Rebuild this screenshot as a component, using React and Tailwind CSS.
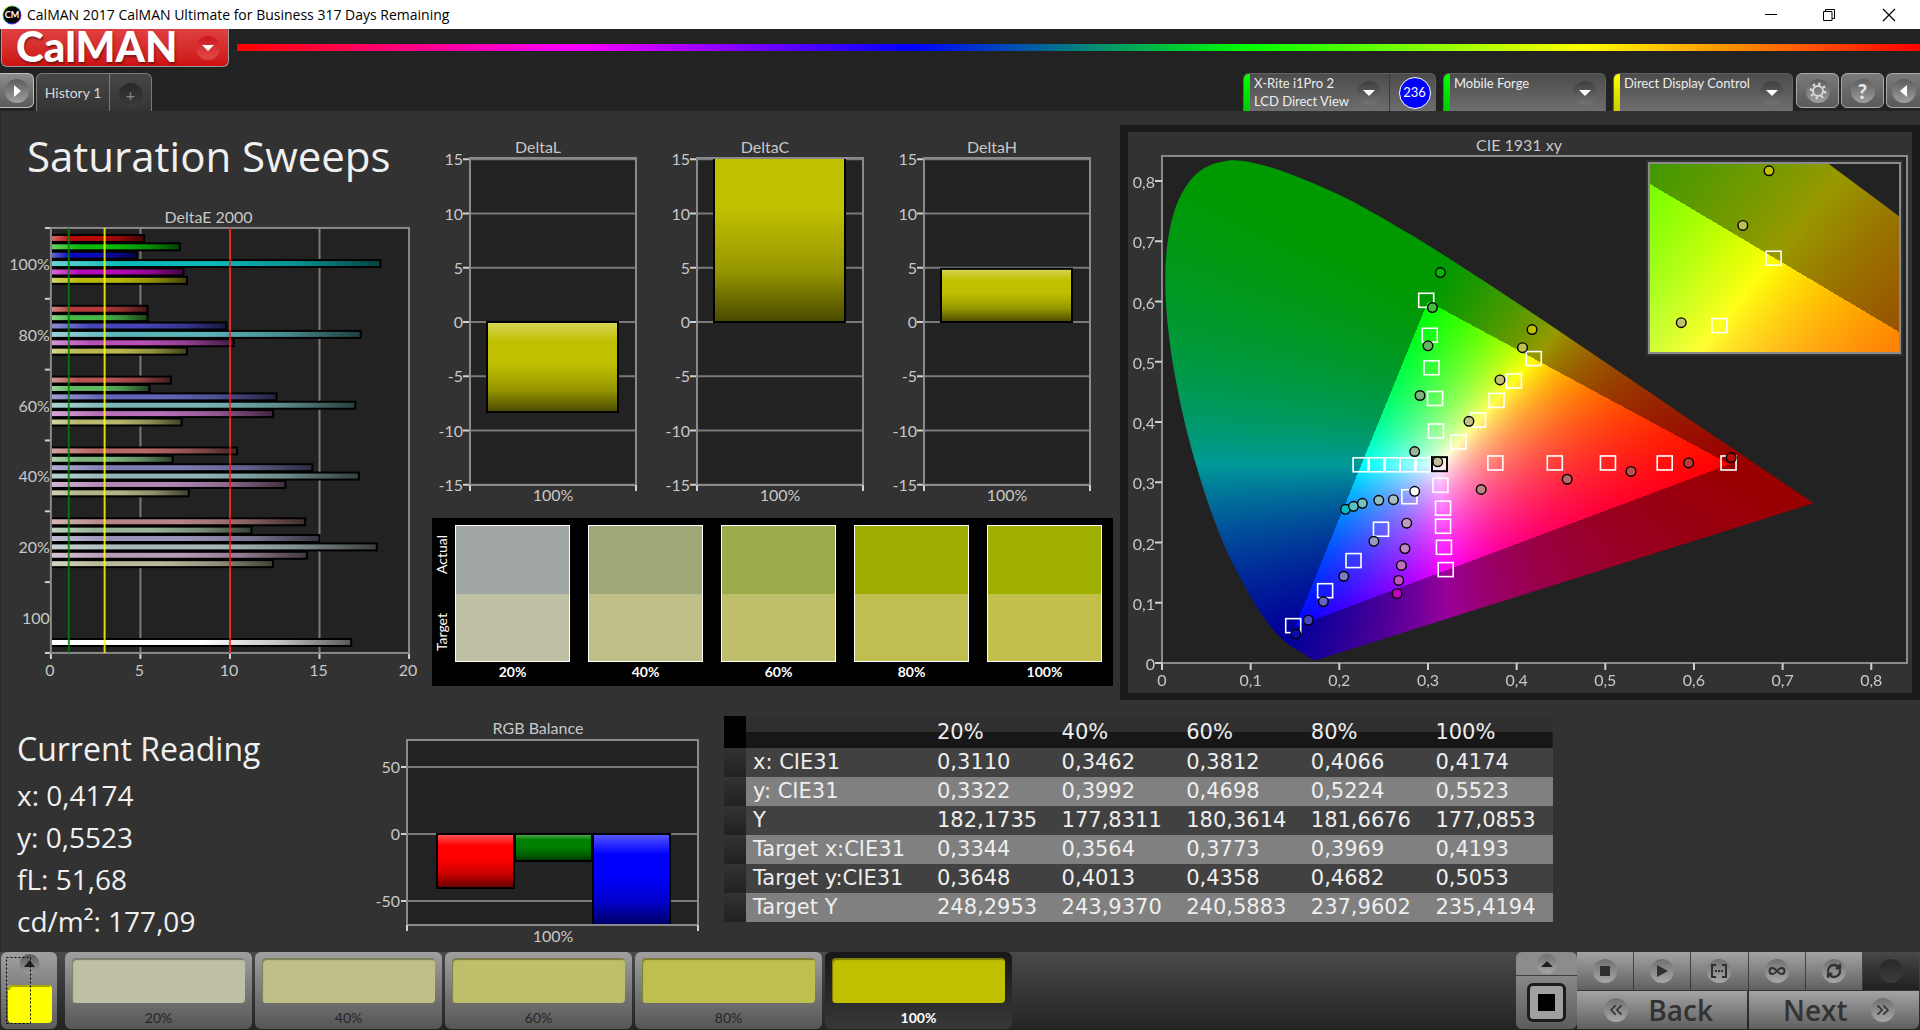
import React, { useLayoutEffect, useRef } from "react";
import {
  ChevronsLeft,
  ChevronsRight,
  Infinity as InfinityIcon,
  RefreshCw,
} from "lucide-react";

const LEVELS = ["20%", "40%", "60%", "80%", "100%"];

// red, green, blue, cyan, magenta, yellow for each saturation level
const PALETTE = {
  100: ["#b80a0a", "#0ab80a", "#0a0ab8", "#0ab8b8", "#b80ab8", "#b8b80a"],
  80: ["#b83a3a", "#46b846", "#4646b8", "#5ab4b8", "#b84fb8", "#b8b84f"],
  60: ["#b85252", "#5fb85f", "#6464b8", "#78b4b4", "#b86eb8", "#b8b86e"],
  40: ["#b86868", "#7cb47c", "#7c7cb4", "#8eb4b4", "#b488b4", "#b4b488"],
  20: ["#b88484", "#98b498", "#9894b8", "#a8b8b8", "#b89cb4", "#b8b89c"],
};

const DELTA_E = [
  { level: 100, values: [5.2, 7.2, 4.8, 18.4, 7.4, 7.6] },
  { level: 80, values: [5.4, 5.4, 9.8, 17.3, 10.2, 7.6] },
  { level: 60, values: [6.7, 5.5, 12.6, 17, 12.4, 7.3] },
  { level: 40, values: [10.4, 6.8, 14.6, 17.2, 13.1, 7.7] },
  { level: 20, values: [14.2, 11.2, 15, 18.2, 14.3, 12.4] },
];

const SWATCHES = [
  { actual: "#a1a7a2", target: "#bfbfa4" },
  { actual: "#9fa778", target: "#c0bf87" },
  { actual: "#9eab4a", target: "#bfbe6a" },
  { actual: "#9fac00", target: "#bfbf51" },
  { actual: "#9fb000", target: "#c2c04a" },
];

const TABLE = [
  ["x: CIE31", "0,3110", "0,3462", "0,3812", "0,4066", "0,4174"],
  ["y: CIE31", "0,3322", "0,3992", "0,4698", "0,5224", "0,5523"],
  ["Y", "182,1735", "177,8311", "180,3614", "181,6676", "177,0853"],
  ["Target x:CIE31", "0,3344", "0,3564", "0,3773", "0,3969", "0,4193"],
  ["Target y:CIE31", "0,3648", "0,4013", "0,4358", "0,4682", "0,5053"],
  ["Target Y", "248,2953", "243,9370", "240,5883", "237,9602", "235,4194"],
];

const LOCUS = [
  [0.1741, 0.005], [0.1714, 0.0051], [0.1689, 0.0069], [0.1644, 0.0109],
  [0.1566, 0.0177], [0.144, 0.0297], [0.1355, 0.0399], [0.1241, 0.0578],
  [0.1096, 0.0868], [0.0913, 0.1327], [0.0687, 0.2007], [0.0454, 0.295],
  [0.0235, 0.4127], [0.0082, 0.5384], [0.0039, 0.6548], [0.0139, 0.7502],
  [0.0389, 0.812], [0.0743, 0.8338], [0.1142, 0.8262], [0.1547, 0.8059],
  [0.1929, 0.7816], [0.2296, 0.7543], [0.3016, 0.6923], [0.3731, 0.6245],
  [0.4441, 0.5547], [0.5125, 0.4866], [0.5752, 0.4242], [0.627, 0.3725],
  [0.6658, 0.334], [0.6915, 0.3083], [0.719, 0.2809], [0.7347, 0.2653],
];

const TARGETS = [
  [0.298, 0.602], [0.302, 0.544], [0.304, 0.49], [0.308, 0.439], [0.309, 0.385],
  [0.4193, 0.5053], [0.3969, 0.4682], [0.3773, 0.4358], [0.3564, 0.4033], [0.3344, 0.3668],
  [0.376, 0.332], [0.443, 0.332], [0.503, 0.332], [0.567, 0.332], [0.639, 0.332],
  [0.224, 0.329], [0.242, 0.329], [0.26, 0.329], [0.277, 0.329], [0.295, 0.329],
  [0.314, 0.295], [0.317, 0.257], [0.317, 0.227], [0.318, 0.192], [0.32, 0.155],
  [0.279, 0.276], [0.247, 0.222], [0.216, 0.17], [0.184, 0.12], [0.148, 0.062],
];

const ACTUALS = [
  [0.314, 0.648, "#00b800"], [0.305, 0.59, "#46b846"], [0.3, 0.5265, "#5fb85f"],
  [0.291, 0.444, "#7cb47c"], [0.285, 0.351, "#98b498"],
  [0.4174, 0.5535, "#c0c000"], [0.4066, 0.5234, "#c0c050"], [0.3812, 0.4698, "#c0c06e"],
  [0.3462, 0.4012, "#c0c088"], [0.311, 0.334, "#c0c09c"],
  [0.36, 0.288, "#b88484"], [0.457, 0.305, "#b86868"], [0.529, 0.318, "#b85252"],
  [0.594, 0.332, "#b83a3a"], [0.642, 0.341, "#b80a0a"],
  [0.207, 0.255, "#00c0c0"], [0.216, 0.26, "#5ac0c0"], [0.226, 0.265, "#78c0c0"],
  [0.2445, 0.27, "#8ec0c0"], [0.261, 0.271, "#a8c0c0"], [0.285, 0.285, "#ffffff"],
  [0.276, 0.232, "#c09cc0"], [0.274, 0.19, "#c088c0"], [0.27, 0.162, "#c06ec0"],
  [0.267, 0.137, "#c04fc0"], [0.265, 0.115, "#c000c0"],
  [0.239, 0.202, "#9898c0"], [0.205, 0.144, "#7c7cc0"], [0.182, 0.102, "#6464c0"],
  [0.165, 0.071, "#4646b8"], [0.151, 0.048, "#0a0ab0"],
];

/* Shared svg gradients */
const GlossDefs = () => (
  <defs>
    <linearGradient id="glossX" x1="0" y1="0" x2="1" y2="0">
      <stop offset="0" stopColor="#fff" stopOpacity="0.4" />
      <stop offset="0.22" stopColor="#fff" stopOpacity="0" />
      <stop offset="0.5" stopColor="#000" stopOpacity="0" />
      <stop offset="0.75" stopColor="#000" stopOpacity="0.22" />
      <stop offset="1" stopColor="#000" stopOpacity="0.65" />
    </linearGradient>
    <linearGradient id="glossY" x1="0" y1="0" x2="0" y2="1">
      <stop offset="0" stopColor="#fff" stopOpacity="0.35" />
      <stop offset="0.22" stopColor="#fff" stopOpacity="0" />
      <stop offset="0.45" stopColor="#000" stopOpacity="0" />
      <stop offset="0.75" stopColor="#000" stopOpacity="0.22" />
      <stop offset="1" stopColor="#000" stopOpacity="0.62" />
    </linearGradient>
    <clipPath id="deltaPlot">
      <rect x="39" y="26" width="164" height="325" />
    </clipPath>
    <clipPath id="rgbPlot">
      <rect x="16" y="25" width="289" height="183" />
    </clipPath>
  </defs>
);

const Bar = ({ x, y, width, height, color, gloss = "url(#glossY)" }) => (
  <g>
    <rect x={x} y={y} width={width} height={height} fill={color} />
    <rect x={x} y={y} width={width} height={height} fill={gloss} stroke="#000" strokeWidth="2" />
  </g>
);

/* DeltaE 2000 */
const DeltaEChart = () => {
  const left = 50;
  const top = 23;
  const w = 359;
  const h = 426;
  const unit = w / 20;
  return (
    <svg viewBox="0 0 432 481" className="block w-full text-[16px]" fill="#c8c8c8">
      <GlossDefs />
      <text x="208" y="18" textAnchor="middle">DeltaE 2000</text>
      <rect x={left} y={top} width={w} height={h} fill="#222222" />
      {[5, 10, 15].map((v) => (
        <line key={v} x1={left + v * unit} x2={left + v * unit} y1={top} y2={top + h} stroke="#7a7a7a" strokeWidth="2" />
      ))}
      {DELTA_E.map(({ level, values }, g) =>
        values.map((v, i) => (
          <Bar
            key={`${level}-${i}`}
            x={left}
            y={top + 7 + g * 71 + i * 8.4}
            width={v * unit}
            height={7}
            color={PALETTE[level][i]}
            gloss="url(#glossX)"
          />
        ))
      )}
      <Bar x={left} y={435} width={301} height={7} color="#ffffff" gloss="url(#glossX)" />
      <rect x={left} y={top} width={w} height={h} fill="none" stroke="#8a8a8a" strokeWidth="2" />
      <line x1={left + unit} x2={left + unit} y1={top} y2={top + h} stroke="#008000" strokeOpacity="0.85" strokeWidth="2" />
      <line x1={left + 3 * unit} x2={left + 3 * unit} y1={top} y2={top + h} stroke="#ffff00" strokeOpacity="0.85" strokeWidth="2" />
      <line x1={left + 10 * unit} x2={left + 10 * unit} y1={top} y2={top + h} stroke="#ff1414" strokeOpacity="0.8" strokeWidth="2" />
      {[0, 1, 2, 3, 4, 5, 6].map((i) => (
        <line key={i} x1="44" x2="49" y1={top + i * 71} y2={top + i * 71} stroke="#d0d0d0" strokeWidth="2" />
      ))}
      {["100%", "80%", "60%", "40%", "20%", "100"].map((t, i) => (
        <text key={i} x="49" y={65 + i * 71} textAnchor="end">{t}</text>
      ))}
      {[0, 5, 10, 15, 20].map((v) => (
        <g key={v}>
          <line x1={left + v * unit} x2={left + v * unit} y1={top + h + 1} y2={top + h + 6} stroke="#d0d0d0" strokeWidth="2" />
          <text x={left - 1 + v * unit} y="472" textAnchor="middle">{v}</text>
        </g>
      ))}
    </svg>
  );
};

/* DeltaL / DeltaC / DeltaH */
const DeltaChart = ({ title, from, to }) => {
  const left = 38;
  const top = 25;
  const w = 166;
  const zero = 189;
  const unit = 10.85;
  const y = (v) => zero - v * unit;
  return (
    <svg viewBox="0 0 227 385" className="block w-full text-[16px]" fill="#c8c8c8">
      <GlossDefs />
      <text x="106" y="20" textAnchor="middle">{title}</text>
      <rect x={left} y={top} width={w} height="327" fill="#222222" />
      {[15, 10, 5, 0, -5, -10, -15].map((v) => (
        <g key={v}>
          <line x1={left} x2={left + w} y1={y(v)} y2={y(v)} stroke="#7a7a7a" strokeWidth="2" />
          <line x1={left - 7} x2={left} y1={y(v)} y2={y(v)} stroke="#d0d0d0" strokeWidth="2" />
          <text x={left - 7} y={y(v) + 6} textAnchor="end">{v}</text>
        </g>
      ))}
      <g clipPath="url(#deltaPlot)">
        <Bar x={left + 17} y={y(from)} width={131} height={(from - to) * unit} color="#c0c000" />
      </g>
      <rect x={left} y={top} width={w} height="327" fill="none" stroke="#8a8a8a" strokeWidth="2" />
      <line x1={left} x2={left} y1="352" y2="358" stroke="#d0d0d0" strokeWidth="2" />
      <line x1={left + w} x2={left + w} y1="352" y2="358" stroke="#d0d0d0" strokeWidth="2" />
      <text x={left + w / 2} y="368" textAnchor="middle">100%</text>
    </svg>
  );
};

/* RGB Balance */
const RgbBalance = () => (
  <svg viewBox="0 0 332 232" className="block w-full overflow-visible text-[16px]" fill="#c8c8c8">
    <GlossDefs />
    <text x="146" y="18" textAnchor="middle">RGB Balance</text>
    <rect x="15" y="24" width="291" height="185" fill="#222222" />
    {[50, 0, -50].map((v) => {
      const y = 118 - v * 1.34;
      return (
        <g key={v}>
          <line x1="15" x2="306" y1={y} y2={y} stroke="#7a7a7a" strokeWidth="2" />
          <line x1="9" x2="15" y1={y} y2={y} stroke="#d0d0d0" strokeWidth="2" />
          <text x="8" y={y + 6} textAnchor="end">{v}</text>
        </g>
      );
    })}
    <g clipPath="url(#rgbPlot)">
      <Bar x={45} y={118} width={77} height={54} color="#ff0000" />
      <Bar x={123} y={118} width={77} height={27} color="#008000" />
      <Bar x={201} y={118} width={77} height={92} color="#0000ff" />
    </g>
    <rect x="15" y="24" width="291" height="185" fill="none" stroke="#8a8a8a" strokeWidth="2" />
    <line x1="15" x2="15" y1="209" y2="215" stroke="#d0d0d0" strokeWidth="2" />
    <line x1="306" x2="306" y1="209" y2="215" stroke="#d0d0d0" strokeWidth="2" />
    <text x="161" y="226" textAnchor="middle">100%</text>
  </svg>
);

// Catmull-Rom through the locus points, closed by the purple line
function locusPath(toX, toY) {
  const p = LOCUS.map(([x, y]) => [toX(x), toY(y)]);
  let d = `M${p[0][0]} ${p[0][1]}`;
  for (let i = 0; i < p.length - 1; i++) {
    const a = p[Math.max(i - 1, 0)];
    const b = p[i];
    const c = p[i + 1];
    const e = p[Math.min(i + 2, p.length - 1)];
    d += `C${b[0] + (c[0] - a[0]) / 6} ${b[1] + (c[1] - a[1]) / 6} ${c[0] - (e[0] - b[0]) / 6} ${c[1] - (e[1] - b[1]) / 6} ${c[0]} ${c[1]}`;
  }
  return d + "Z";
}

/* Chromaticity fill for a given xy window */
const Gamut = ({ width, height, x0, x1, y0, y1 }) => {
  const ref = useRef(null);

  useLayoutEffect(() => {
    const ctx = ref.current.getContext("2d");
    const img = ctx.createImageData(width, height);
    for (let j = 0; j < height; j++) {
      const y = y1 - ((j + 0.5) / height) * (y1 - y0);
      for (let i = 0; i < width; i++) {
        const x = x0 + ((i + 0.5) / width) * (x1 - x0);
        const X = x / y;
        const Z = (1 - x - y) / y;
        const r = 3.2406 * X - 1.5372 - 0.4986 * Z;
        const g = -0.9689 * X + 1.8758 + 0.0415 * Z;
        const b = 0.0557 * X - 0.204 + 1.057 * Z;
        const max = Math.max(r, g, b);
        // colours outside of Rec.709 are dimmed
        const k = (Math.min(r, g, b) < 0 ? 153 : 255) / max;
        const o = (j * width + i) * 4;
        img.data[o] = Math.max(r, 0) * k;
        img.data[o + 1] = Math.max(g, 0) * k;
        img.data[o + 2] = Math.max(b, 0) * k;
        img.data[o + 3] = 255;
      }
    }
    ctx.putImageData(img, 0, 0);
    ctx.globalCompositeOperation = "destination-in";
    const toX = (x) => ((x - x0) / (x1 - x0)) * width;
    const toY = (y) => ((y1 - y) / (y1 - y0)) * height;
    ctx.fill(new Path2D(locusPath(toX, toY)));
    ctx.globalCompositeOperation = "source-over";
  }, [width, height, x0, x1, y0, y1]);

  return <canvas ref={ref} width={width} height={height} className="block" />;
};

const Markers = ({ toX, toY, inside }) => (
  <g>
    {TARGETS.filter(inside).map(([x, y], i) => (
      <rect key={i} x={toX(x) - 7.5} y={toY(y) - 7} width="15" height="14" fill="none" stroke="#fff" strokeWidth="1.6" />
    ))}
    {inside([0.313, 0.33]) && (
      <rect x={toX(0.313) - 7.5} y={toY(0.33) - 7} width="15" height="14" fill="none" stroke="#000" strokeWidth="2" />
    )}
    {ACTUALS.filter(inside).map(([x, y, c], i) => (
      <circle key={i} cx={toX(x)} cy={toY(y)} r="4.8" fill={c} stroke="#000" strokeWidth="1.4" />
    ))}
  </g>
);

/* CIE 1931 xy */
const CieChart = () => {
  const ux = 886.6;
  const uy = 602.5;
  const ix = (x) => 521 + (x - 0.3679) * 2424;
  const iy = (y) => 221 - (y - 0.4531) * 1815;
  const ticks = [0, 0.1, 0.2, 0.3, 0.4, 0.5, 0.6, 0.7, 0.8];
  const label = (v) => String(v).replace(".", ",");
  return (
    <svg viewBox="0 0 784 561" className="block w-full bg-[#323232] text-[16px]" fill="#c8c8c8">
      <text x="391" y="19" textAnchor="middle">CIE 1931 xy</text>
      <rect x="34" y="24" width="745" height="507" fill="#222222" />
      <foreignObject x="34" y="24" width="745" height="507">
        <Gamut width={745} height={507} x0={0} x1={0.8403} y0={0} y1={0.8415} />
      </foreignObject>
      <rect x="34" y="24" width="745" height="507" fill="none" stroke="#8a8a8a" strokeWidth="2" />
      <Markers toX={(x) => 34 + x * ux} toY={(y) => 531 - y * uy} inside={() => true} />
      {ticks.map((v) => (
        <g key={v}>
          <line x1={34 + v * ux} x2={34 + v * ux} y1="531" y2="538" stroke="#d0d0d0" strokeWidth="2" />
          <text x={34 + v * ux} y="554" textAnchor="middle">{label(v)}</text>
          <line x1="27" x2="34" y1={531 - v * uy} y2={531 - v * uy} stroke="#d0d0d0" strokeWidth="2" />
          <text x="27" y={538 - v * uy} textAnchor="end">{label(v)}</text>
        </g>
      ))}
      <rect x="518" y="28" width="257" height="196" fill="#323232" />
      <rect x="521" y="31" width="251" height="190" fill="#222222" />
      <foreignObject x="521" y="31" width="251" height="190">
        <Gamut width={251} height={190} x0={0.3679} x1={0.4714} y0={0.4526} y1={0.5573} />
      </foreignObject>
      <rect x="521" y="31" width="251" height="190" fill="none" stroke="#8a8a8a" strokeWidth="2" />
      <Markers toX={ix} toY={iy} inside={([x, y]) => x > 0.37 && x < 0.47 && y > 0.46 && y < 0.557} />
    </svg>
  );
};

const TONES = {
  light: "bg-linear-to-b from-[#5c5c5c] to-[#a0a0a0]",
  key: "bg-linear-to-b from-[#707070] to-[#a8a8a8]",
  dim: "bg-linear-to-b from-[#3e3e3e] to-[#747474]",
  dark: "bg-linear-to-b from-[#282828] to-[#3c3c3c]",
  red: "bg-linear-to-b from-[#cc1020] to-[#e04848]",
};

const RoundIcon = ({ children, tone = "light", size = "h-6 w-6" }) => (
  <span className={`flex shrink-0 items-center justify-center rounded-full ${size} ${TONES[tone]}`}>
    {children}
  </span>
);

const Triangle = ({ points, size = 12 }) => (
  <svg width={size} height={size} viewBox="0 0 12 12" fill="currentColor">
    <polygon points={points} />
  </svg>
);

const DOWN = "0,3 12,3 6,9";

const TitleBar = () => (
  <div className="flex items-center h-[29px] bg-white text-black">
    <svg width="20" height="20" viewBox="0 0 20 20" className="ml-[2px]">
      <defs>
        <linearGradient id="ring" x1="0" y1="0" x2="1" y2="1">
          <stop offset="0" stopColor="#e0e000" />
          <stop offset="0.35" stopColor="#20c040" />
          <stop offset="0.65" stopColor="#2040ff" />
          <stop offset="1" stopColor="#f020a0" />
        </linearGradient>
      </defs>
      <circle cx="10" cy="10" r="9.5" fill="url(#ring)" />
      <circle cx="10" cy="10" r="8.5" fill="#000" />
      <text x="10" y="13" textAnchor="middle" fill="#fff" className="text-[9px] font-bold">CM</text>
    </svg>
    <span className="ml-[5px] text-[14px] font-['Open_Sans',sans-serif] grow">
      CalMAN 2017 CalMAN Ultimate for Business 317 Days Remaining
    </span>
    <div className="flex h-full">
      <button aria-label="Minimize" className="w-[58px] flex items-center justify-center">
        <svg width="14" height="14" viewBox="0 0 14 14" stroke="#000"><path d="M1 6.5h12" /></svg>
      </button>
      <button aria-label="Restore" className="w-[58px] flex items-center justify-center">
        <svg width="14" height="14" viewBox="0 0 14 14" stroke="#000" fill="none">
          <path d="M1.500 3.500h8.500v9h-8.500zM3.500 3.500v-2h9v9h-2.500" />
        </svg>
      </button>
      <button aria-label="Close" className="w-[62px] flex items-center justify-center">
        <svg width="14" height="14" viewBox="0 0 14 14" stroke="#000" strokeWidth="1.2"><path d="M1 1l12 12M13 1L1 13" /></svg>
      </button>
    </div>
  </div>
);

const Device = ({ lines, status, className, children }) => (
  <div className={`flex h-[38px] overflow-hidden rounded-t-md border border-b-0 border-[#626262] bg-linear-to-b from-[#4c4c4c] to-[#6e6e6e] ${className}`}>
    <span className={`w-[6px] shrink-0 bg-linear-to-b ${status}`} />
    <button className="flex grow items-center justify-between pl-1 pr-2 text-left text-[13px] leading-[18px] text-[#eeeeee]">
      <span className="h-full whitespace-nowrap">
        {lines.map((l) => (
          <span key={l} className="block">{l}</span>
        ))}
      </span>
      <span className="text-white">
        <RoundIcon tone="dim">
          <Triangle points={DOWN} />
        </RoundIcon>
      </span>
    </button>
    {children}
  </div>
);

const Header = () => (
  <header className="bg-[#222222]">
    <div className="flex items-start h-[44px]">
      <button className="ml-px flex items-center justify-between w-[228px] h-[38px] overflow-hidden rounded-b-md border border-t-0 border-[#9a9a9a] bg-linear-to-b from-[#e04040] to-[#cc1010] pl-[14px] pr-2 text-white">
        <span className="pb-1 text-[42px] leading-[36px] font-black [text-shadow:1px_2px_2px_rgba(0,0,0,0.4)]">CalMAN</span>
        <RoundIcon tone="red">
          <Triangle points={DOWN} />
        </RoundIcon>
      </button>
      <div className="ml-2 mt-[15px] h-[7px] grow bg-[linear-gradient(to_right,#f00,#f0f,#00f,#0f0,#ff0,#f00)]" />
    </div>
    <div className="flex items-start justify-between h-[38px]">
      <div className="flex">
        <button aria-label="Expand" className="w-[34px] h-[35px] flex items-center justify-end pr-1 rounded-r-md border border-l-0 border-[#c0c0c0] bg-linear-to-b from-[#8c8c8c] to-[#5a5a5a] text-white">
          <RoundIcon>
            <Triangle points="3,0 10,6 3,12" />
          </RoundIcon>
        </button>
        <div className="ml-[2px] flex h-[38px] rounded-t-md border border-b-0 border-[#7a7a7a] bg-linear-to-b from-[#474747] to-[#343434]">
          <button className="w-[73px] border-r border-[#7a7a7a] text-[14px] text-[#d8d8d8]">History 1</button>
          <button aria-label="Add history" className="w-[41px] flex items-center justify-center pt-1 text-[16px] text-[#8a8a8a]">
            <RoundIcon tone="dark">+</RoundIcon>
          </button>
        </div>
      </div>
      <div className="flex">
        <Device lines={["X-Rite i1Pro 2", "LCD Direct View"]} status="from-[#00ff00] to-[#00cc00]" className="w-[193px]">
          <span className="flex items-center justify-center w-[46px] border-l border-[#3a3a3a] pl-1">
            <span className="flex items-center justify-center w-8 h-8 rounded-full border border-white bg-[#0000ff] text-[13px] text-white">
              236
            </span>
          </span>
        </Device>
        <Device lines={["Mobile Forge"]} status="from-[#00ff00] to-[#00cc00]" className="ml-[7px] w-[163px]" />
        <Device lines={["Direct Display Control"]} status="from-[#ffff00] to-[#cccc00]" className="ml-[7px] w-[180px]" />
        <button aria-label="Settings" className="ml-[3px] w-[43px] h-[35px] flex items-center justify-center rounded-md border border-[#a8a8a8] bg-linear-to-b from-[#7a7a7a] to-[#5a5a5a] text-[#d8d8d8]">
          <RoundIcon>
            <svg width="18" height="18" viewBox="0 0 18 18" fill="none" stroke="currentColor">
              <circle cx="9" cy="9" r="5" strokeWidth="2" />
              <circle cx="9" cy="9" r="7.200" strokeWidth="2.400" strokeDasharray="2.400 3.250" />
            </svg>
          </RoundIcon>
        </button>
        <button aria-label="Help" className="ml-[2px] w-[43px] h-[35px] flex items-center justify-center rounded-md border border-[#a8a8a8] bg-linear-to-b from-[#7a7a7a] to-[#5a5a5a] text-[20px] font-black text-[#e8e8e8]">
          <RoundIcon>?</RoundIcon>
        </button>
        <button aria-label="Collapse" className="ml-[2px] w-[34px] h-[35px] flex items-center justify-center rounded-l-md border border-r-0 border-[#a8a8a8] bg-linear-to-b from-[#7a7a7a] to-[#5a5a5a] text-white">
          <RoundIcon>
            <Triangle points="9,0 2,6 9,12" />
          </RoundIcon>
        </button>
      </div>
    </div>
  </header>
);

const SwatchPanel = () => (
  <div className="flex h-[168px] bg-black pl-[2px] pr-[11px] pt-[7px] text-white">
    <div className="flex w-[21px] h-[136px] flex-col items-start justify-between py-[10px] text-[14px]">
      <span className="rotate-180 leading-[16px] [writing-mode:vertical-rl]">Actual</span>
      <span className="rotate-180 leading-[16px] [writing-mode:vertical-rl]">Target</span>
    </div>
    <div className="grid grow grid-cols-5 gap-[18px]">
      {SWATCHES.map((s, i) => (
        <div key={LEVELS[i]} className="text-center text-[14px] font-bold">
          <div className="h-[137px] border border-white">
            <div className="h-1/2" style={{ background: s.actual }} />
            <div className="h-1/2" style={{ background: s.target }} />
          </div>
          <div className="leading-[20px]">{LEVELS[i]}</div>
        </div>
      ))}
    </div>
  </div>
);

const ReadingTable = () => (
  <table className="h-fit w-full table-fixed border-collapse text-left text-[21px] font-normal text-[#eeeeee] font-['DejaVu_Sans',sans-serif]">
    <colgroup>
      <col className="w-[22px]" />
      <col className="w-[184px]" />
      <col span="5" />
    </colgroup>
    <thead>
      <tr className="h-8 leading-[32px] bg-[linear-gradient(to_bottom,#2f2f2f_50%,#171717_50%)]">
        <td className="bg-black" />
        <td />
        {LEVELS.map((l) => (
          <th key={l} scope="col" className="p-0 pl-[7px] font-normal">{l}</th>
        ))}
      </tr>
    </thead>
    <tbody>
      {TABLE.map(([name, ...cells], i) => (
        <tr key={name} className={`h-[29px] leading-[29px] ${i % 2 ? "bg-[#808080]" : "bg-[#414141]"}`}>
          <td className="bg-linear-to-b from-[#333333] to-[#212121] p-0" />
          <th scope="row" className="p-0 pl-[7px] font-normal whitespace-nowrap">{name}</th>
          {cells.map((c, j) => (
            <td key={j} className="p-0 pl-[7px]">{c}</td>
          ))}
        </tr>
      ))}
    </tbody>
  </table>
);

const TransportButton = ({ label, children }) => (
  <button aria-label={label} className="flex items-center justify-center bg-linear-to-b from-[#a4a4a4] to-[#606060] text-[#303030]">
    <RoundIcon tone="key">{children}</RoundIcon>
  </button>
);

const PATCHES = ["#bfbfa4", "#c0bf87", "#bfbe6a", "#bfbf4f", "#c0c000"];

const BottomBar = () => (
  <footer className="flex h-[78px] bg-linear-to-b from-[#4a4a4a] to-[#242424] pb-px pl-px">
    <button aria-label="Pattern size" className="flex w-[56px] flex-col items-center rounded-md bg-linear-to-b from-[#a0a0a0] to-[#5c5c5c]">
      <svg width="56" height="76" viewBox="0 0 56 76">
        <defs>
          <linearGradient id="knob" x1="0" y1="0" x2="0" y2="1">
            <stop offset="0" stopColor="#5c5c5c" />
            <stop offset="1" stopColor="#9a9a9a" />
          </linearGradient>
        </defs>
        <circle cx="28.500" cy="12" r="10" fill="url(#knob)" />
        <rect x="7" y="33" width="44" height="38" rx="4" fill="#ffff00" />
        <path d="M8 38q0-4 4-4h37" stroke="#a8a800" strokeWidth="2" fill="none" />
        <polygon points="23,15 34,15 28.500,8" fill="#202020" />
        <rect x="5.500" y="5.500" width="24" height="66" fill="none" stroke="#000" strokeDasharray="2 2" />
      </svg>
    </button>
    <div className="ml-2 flex gap-[3px]">
      {PATCHES.map((c, i) => (
        <button
          key={LEVELS[i]}
          className={`flex w-[187px] flex-col items-center rounded-md px-[7px] pt-[6px] text-[14px] ${
            i === 4
              ? "bg-linear-to-b from-[#181818] to-[#383838] font-bold text-white"
              : "bg-linear-to-b from-[#a0a0a0] to-[#565656] text-[#262626]"
          }`}
        >
          <span
            className="h-[45px] w-full rounded-[4px] [box-shadow:inset_1px_2px_1px_rgba(0,0,0,0.35)]"
            style={{ background: c }}
          />
          <span className="mt-[5px] leading-[20px]">{LEVELS[i]}</span>
        </button>
      ))}
    </div>
    <div className="ml-auto flex pr-px">
      <div className="flex w-[61px] flex-col gap-px overflow-hidden rounded-md text-[#202020]">
        <button aria-label="More" className="flex h-[23px] items-center justify-center bg-[#8c8c8c]">
          <RoundIcon tone="key" size="h-5 w-5">
            <Triangle points="0,9 12,9 6,3" />
          </RoundIcon>
        </button>
        <button aria-label="Window pattern" className="flex grow items-center justify-center bg-linear-to-b from-[#888888] to-[#5c5c5c]">
          <span className="flex h-[39px] w-[39px] items-center justify-center rounded-md border-3 border-[#1c1c1c] bg-[#a0a0a0]">
            <span className="h-[17px] w-[17px] bg-black" />
          </span>
        </button>
      </div>
      <div className="grid w-[342px] grid-rows-[38px_38px] gap-px">
        <div className="grid grid-cols-6 gap-px">
          <TransportButton label="Stop">
            <svg width="10" height="10"><rect width="10" height="10" fill="currentColor" /></svg>
          </TransportButton>
          <TransportButton label="Play">
            <Triangle points="1,0 12,6 1,12" />
          </TransportButton>
          <TransportButton label="Read series">
            <svg width="16" height="14" viewBox="0 0 16 14" fill="none" stroke="currentColor" strokeWidth="2">
              <path d="M5 1H1v12h4M11 1h4v12h-4M4 7h2M7 7h2M10 7h2" />
            </svg>
          </TransportButton>
          <TransportButton label="Read continuous">
            <InfinityIcon size={18} strokeWidth={2.5} />
          </TransportButton>
          <TransportButton label="Repeat">
            <RefreshCw size={16} strokeWidth={3.5} />
          </TransportButton>
          <button aria-label="Record" disabled className="flex items-center justify-center rounded-tr-md bg-linear-to-b from-[#484848] to-[#202020]">
            <RoundIcon tone="dark" />
          </button>
        </div>
        <div className="grid grid-cols-2 gap-[2px] text-[28px] leading-none font-semibold font-['Open_Sans',sans-serif] text-[#333333]">
          <button className="flex items-center justify-between bg-linear-to-b from-[#a4a4a4] to-[#606060] pl-[27px] pr-[34px]">
            <RoundIcon tone="key">
              <ChevronsLeft size={20} strokeWidth={2} />
            </RoundIcon>
            Back
          </button>
          <button className="flex items-center justify-between rounded-br-md bg-linear-to-b from-[#a4a4a4] to-[#606060] pl-[34px] pr-6">
            Next
            <RoundIcon tone="key">
              <ChevronsRight size={20} strokeWidth={2} />
            </RoundIcon>
          </button>
        </div>
      </div>
    </div>
  </footer>
);

export default function App() {
  return (
    <div className="flex min-h-screen flex-col bg-[#323232] font-['Lato',sans-serif]">
      <TitleBar />
      <Header />
      <main className="grow border-l border-[#262626]">
        <div className="grid grid-cols-[minmax(0,431fr)_minmax(0,681fr)_minmax(0,807fr)] items-start">
          <section>
            <h1 className="pt-[20px] pl-[26px] text-[42px] leading-[50px] whitespace-nowrap text-[#f0f0f0] font-['Open_Sans',sans-serif]">
              Saturation Sweeps
            </h1>
            <div className="mt-[24px]">
              <DeltaEChart />
            </div>
          </section>
          <section className="pt-[22px]">
            <div className="grid grid-cols-3">
              <DeltaChart title="DeltaL" from={0} to={-8.3} />
              <DeltaChart title="DeltaC" from={19} to={0} />
              <DeltaChart title="DeltaH" from={4.9} to={0} />
            </div>
            <SwatchPanel />
          </section>
          <section className="mt-[14px] ml-[7px] bg-[#1a1a1a] py-[7px] px-2">
            <CieChart />
          </section>
        </div>
        <div className="mt-4 grid grid-cols-[minmax(0,391fr)_minmax(0,332fr)_minmax(0,829fr)_minmax(0,367fr)] items-start">
          <section className="pt-2 pl-4 text-[28px] leading-[42px] text-[#f0f0f0] font-['Open_Sans',sans-serif]">
            <h2 className="text-[32px] leading-[50px]">Current Reading</h2>
            <p>x: 0,4174</p>
            <p>y: 0,5523</p>
            <p>fL: 51,68</p>
            <p>cd/m²: 177,09</p>
          </section>
          <RgbBalance />
          <ReadingTable />
        </div>
      </main>
      <BottomBar />
    </div>
  );
}
